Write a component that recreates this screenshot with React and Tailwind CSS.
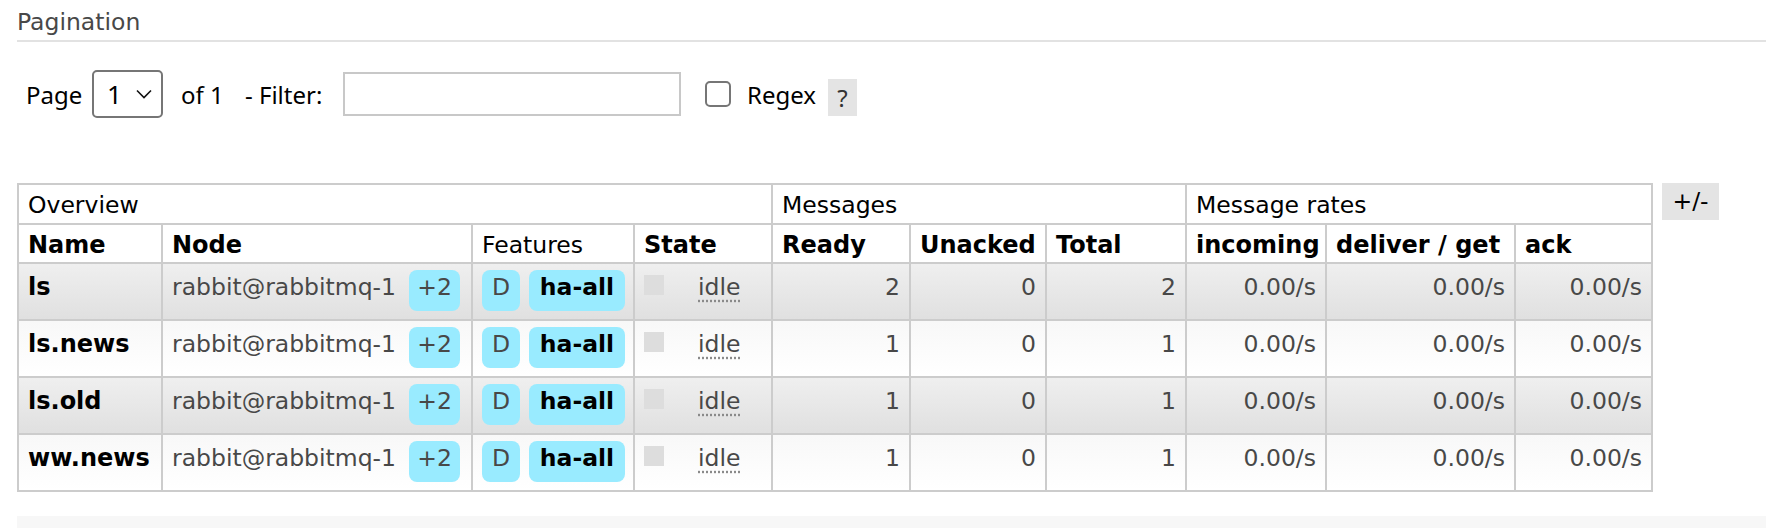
import React from 'react';

const cols = ['w-[144px]', 'w-[310px]', 'w-[162px]', 'w-[138px]', 'w-[138px]', 'w-[136px]', 'w-[140px]', 'w-[140px]', 'w-[189px]', 'w-[137px]'];

const queues = [
  { name: 'ls', ready: 2, unacked: 0, total: 2, alt: true },
  { name: 'ls.news', ready: 1, unacked: 0, total: 1, alt: false },
  { name: 'ls.old', ready: 1, unacked: 0, total: 1, alt: true },
  { name: 'ww.news', ready: 1, unacked: 0, total: 1, alt: false },
];

const cell = 'border-2 border-[#cccccc] px-[9px] whitespace-nowrap';
const head = `${cell} text-left align-middle pt-[3px]`;

const Pill = ({ className, children }) => (
  <span className={`inline-block h-[41px] pt-[4px] leading-[27px] rounded-[8px] bg-[#99ebff] text-center ${className}`}>
    {children}
  </span>
);

const QueueRow = ({ q }) => {
  const bg = q.alt
    ? 'bg-linear-to-b from-[#efefef] to-[#e0e0e0]'
    : 'bg-linear-to-b from-[#f8f8f8] to-[#ffffff]';
  const td = `${cell} ${bg} align-baseline pt-[6px]`;
  return (
    <tr className="h-[57px]">
      <td className={`${td} font-bold text-black text-[24px]`}>{q.name}</td>
      <td className={`${td} text-[#484848]`}>
        rabbit@rabbitmq-1
        <Pill className="ml-[13px] w-[51px]">+2</Pill>
      </td>
      <td className={td}>
        <Pill className="w-[38px] text-[#484848]">D</Pill>
        <Pill className="ml-[9px] w-[96px] font-bold text-black">ha-all</Pill>
      </td>
      <td className={`${td} text-[#484848]`}>
        <span className="inline-block w-[20px] h-[20px] bg-[#dddddd] mr-[34px]" />
        <abbr className="no-underline underline decoration-dotted decoration-[#8a8a8a] underline-offset-[5px]">idle</abbr>
      </td>
      <td className={`${td} text-right text-[#484848]`}>{q.ready}</td>
      <td className={`${td} text-right text-[#484848]`}>{q.unacked}</td>
      <td className={`${td} text-right text-[#484848]`}>{q.total}</td>
      <td className={`${td} text-right text-[#484848]`}>0.00/s</td>
      <td className={`${td} text-right text-[#484848]`}>0.00/s</td>
      <td className={`${td} text-right text-[#484848]`}>0.00/s</td>
    </tr>
  );
};

export default function App() {
  return (
    <div className="w-[1766px] h-[528px] overflow-hidden bg-white font-['DejaVu_Sans',sans-serif] text-[23.5px] leading-[27px]">
      <div className="pl-[17px]">
        <h3 className="pt-[9px] text-[#484848] font-normal">Pagination</h3>
        <div className="mt-[4px] h-[2px] bg-[#e2e2e2]" />

        {/* pagination controls */}
        <div className="mt-[28px] h-[48px] flex items-center font-['Noto_Sans',sans-serif] text-[24px] text-black">
          <span className="ml-[9px] w-[55px] whitespace-nowrap">Page</span>
          <div className="ml-[11px] w-[71px] h-[48px] border-2 border-[#767676] rounded-[5px] flex items-center pl-[13px] text-[26px]">
            <span>1</span>
            <svg className="ml-[14px]" width="16" height="10" viewBox="0 0 16 10">
              <polyline points="1,1.5 8,8.5 15,1.5" fill="none" stroke="#111" strokeWidth="1.6" />
            </svg>
          </div>
          <span className="ml-[18px] w-[42px] whitespace-nowrap">of 1</span>
          <span className="ml-[22px] w-[86px] whitespace-nowrap">- Filter:</span>
          <div className="ml-[12px] w-[338px] h-[44px] border-2 border-[#c8c8c8] bg-white" />
          <div className="ml-[24px] w-[26px] h-[26px] border-2 border-[#767676] rounded-[5px] bg-white" />
          <span className="ml-[16px] w-[71px] whitespace-nowrap">Regex</span>
          <span className="ml-[10px] self-start mt-[9px] w-[29px] h-[37px] bg-[#e4e4e4] text-[#333] flex items-center justify-center">?</span>
        </div>

        {/* queues table */}
        <div className="mt-[65px] flex items-start">
          <table className="table-fixed border-collapse w-[1636px]">
            <colgroup>
              {cols.map((c, i) => (
                <col key={i} className={c} />
              ))}
            </colgroup>
            <thead>
              <tr className="h-[40px]">
                <th colSpan={4} className={`${head} font-normal`}>Overview</th>
                <th colSpan={3} className={`${head} font-normal`}>Messages</th>
                <th colSpan={3} className={`${head} font-normal`}>Message rates</th>
              </tr>
              <tr className="h-[39px] text-[24px]">
                <th className={`${head} font-bold`}>Name</th>
                <th className={`${head} font-bold`}>Node</th>
                <th className={`${head} font-normal text-[23.5px]`}>Features</th>
                <th className={`${head} font-bold`}>State</th>
                <th className={`${head} font-bold`}>Ready</th>
                <th className={`${head} font-bold`}>Unacked</th>
                <th className={`${head} font-bold`}>Total</th>
                <th className={`${head} font-bold`}>incoming</th>
                <th className={`${head} font-bold`}>deliver / get</th>
                <th className={`${head} font-bold`}>ack</th>
              </tr>
            </thead>
            <tbody>
              {queues.map((q) => (
                <QueueRow key={q.name} q={q} />
              ))}
            </tbody>
          </table>
          <button className="ml-[9px] w-[57px] h-[37px] bg-[#e4e4e4] text-black flex items-center justify-center">+/-</button>
        </div>

        <div className="mt-[24px] h-[20px] bg-[#f7f7f7]" />
      </div>
    </div>
  );
}
